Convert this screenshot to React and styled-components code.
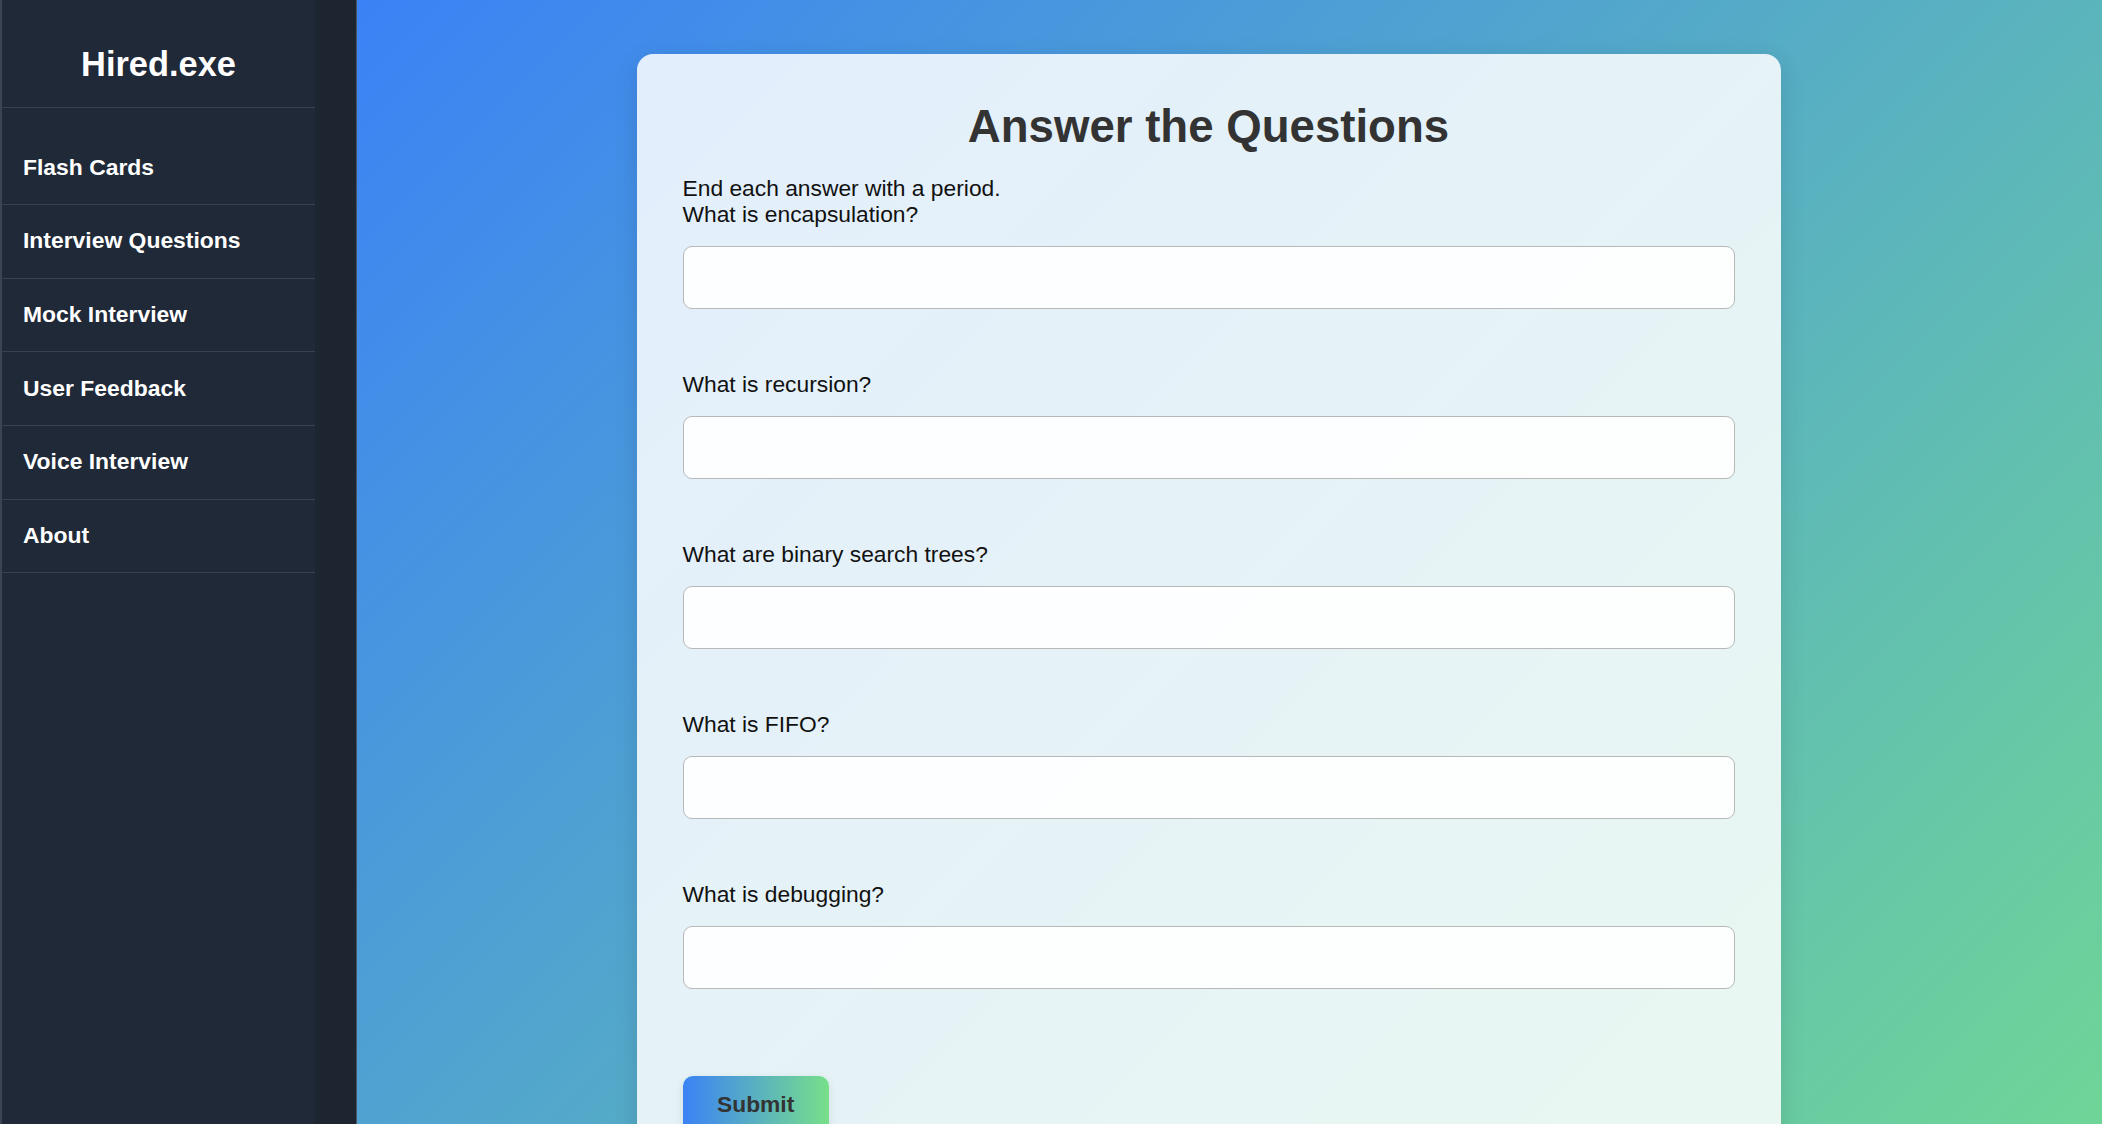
import React from "react";
import styled, { createGlobalStyle } from "styled-components";

const GlobalStyle = createGlobalStyle`
  html, body {
    margin: 0;
    padding: 0;
    height: 100%;
    overflow: hidden;
  }
  body {
    font-family: "Liberation Sans", Arial, Helvetica, sans-serif;
  }
  * { box-sizing: border-box; }
`;

const Layout = styled.div`
  display: flex;
  width: 100vw;
  height: 100vh;
  overflow: hidden;
`;

const Aside = styled.aside`
  display: flex;
  flex: 0 0 357px;
  height: 100%;
  background: #1d2530;
  border-left: 2px solid #3c4452;
  border-right: 1px solid #4b5563;
`;

const Nav = styled.nav`
  width: 313px;
  height: 100%;
  background: #1f2937;
  display: flex;
  flex-direction: column;
`;

const Brand = styled.div`
  padding: 45px 0 23px;
  text-align: center;
  color: #ffffff;
  font-weight: 700;
  font-size: 34.4px;
  line-height: 38.6px;
  border-bottom: 1px solid #374151;
`;

const NavList = styled.ul`
  list-style: none;
  margin: 0;
  padding: 23.5px 0 0;
`;

const NavItem = styled.li`
  border-bottom: 1px solid #374151;
`;

const NavLink = styled.a`
  display: block;
  padding: 23.5px 21px;
  color: #ffffff;
  font-weight: 700;
  font-size: 22.9px;
  line-height: 25.7px;
  text-decoration: none;
  cursor: pointer;
`;

const Main = styled.main`
  flex: 1;
  height: 100%;
  overflow: hidden;
  padding: 54px 42px 0 0;
  background: linear-gradient(135deg, #3b82f6 0%, #6fd597 100%);
`;

const Card = styled.section`
  width: 1144px;
  margin: 0 auto;
  padding: 47px 46px 60px;
  background: rgba(255, 255, 255, 0.85);
  border-radius: 16px;
  box-shadow: 0 6px 24px rgba(0, 0, 0, 0.12);
`;

const Title = styled.h1`
  margin: 0 0 23px;
  text-align: center;
  color: #333333;
  font-size: 45.6px;
  line-height: 52.4px;
  font-weight: 700;
`;

const Intro = styled.p`
  margin: 0;
  color: #111111;
  font-size: 22.8px;
  line-height: 25.7px;
`;

const Question = styled.div`
  display: flex;
  flex-direction: column;
  margin-bottom: 63.5px;
`;

const Label = styled.label`
  color: #111111;
  font-size: 22.8px;
  line-height: 25.7px;
`;

const Input = styled.input`
  margin-top: 18.5px;
  width: 100%;
  height: 62.3px;
  padding: 0 16px;
  border: 1px solid #b8b8b8;
  border-radius: 9px;
  background: rgba(255, 255, 255, 0.9);
  font-family: inherit;
  font-size: 22.4px;
  outline: none;
`;

const SubmitButton = styled.button`
  margin-top: 23.5px;
  padding: 16.8px 34.5px;
  border: none;
  border-radius: 10px;
  background: linear-gradient(90deg, #3b82f6 0%, #77df8a 100%);
  color: #333333;
  font-family: inherit;
  font-weight: 700;
  font-size: 22.8px;
  line-height: 25.7px;
  box-shadow: 0 3px 10px rgba(0, 0, 0, 0.1);
  cursor: pointer;
`;

const navItems = [
  "Flash Cards",
  "Interview Questions",
  "Mock Interview",
  "User Feedback",
  "Voice Interview",
  "About",
];

const questions = [
  "What is encapsulation?",
  "What is recursion?",
  "What are binary search trees?",
  "What is FIFO?",
  "What is debugging?",
];

export default function App() {
  return (
    <>
      <GlobalStyle />
      <Layout>
        <Aside>
          <Nav>
            <Brand>Hired.exe</Brand>
            <NavList>
              {navItems.map((item) => (
                <NavItem key={item}>
                  <NavLink>{item}</NavLink>
                </NavItem>
              ))}
            </NavList>
          </Nav>
        </Aside>
        <Main>
          <Card>
            <Title>Answer the Questions</Title>
            <Intro>End each answer with a period.</Intro>
            <form onSubmit={(e) => e.preventDefault()}>
              {questions.map((q, i) => (
                <Question key={q}>
                  <Label htmlFor={`q${i}`}>{q}</Label>
                  <Input id={`q${i}`} type="text" />
                </Question>
              ))}
              <SubmitButton type="submit">Submit</SubmitButton>
            </form>
          </Card>
        </Main>
      </Layout>
    </>
  );
}
